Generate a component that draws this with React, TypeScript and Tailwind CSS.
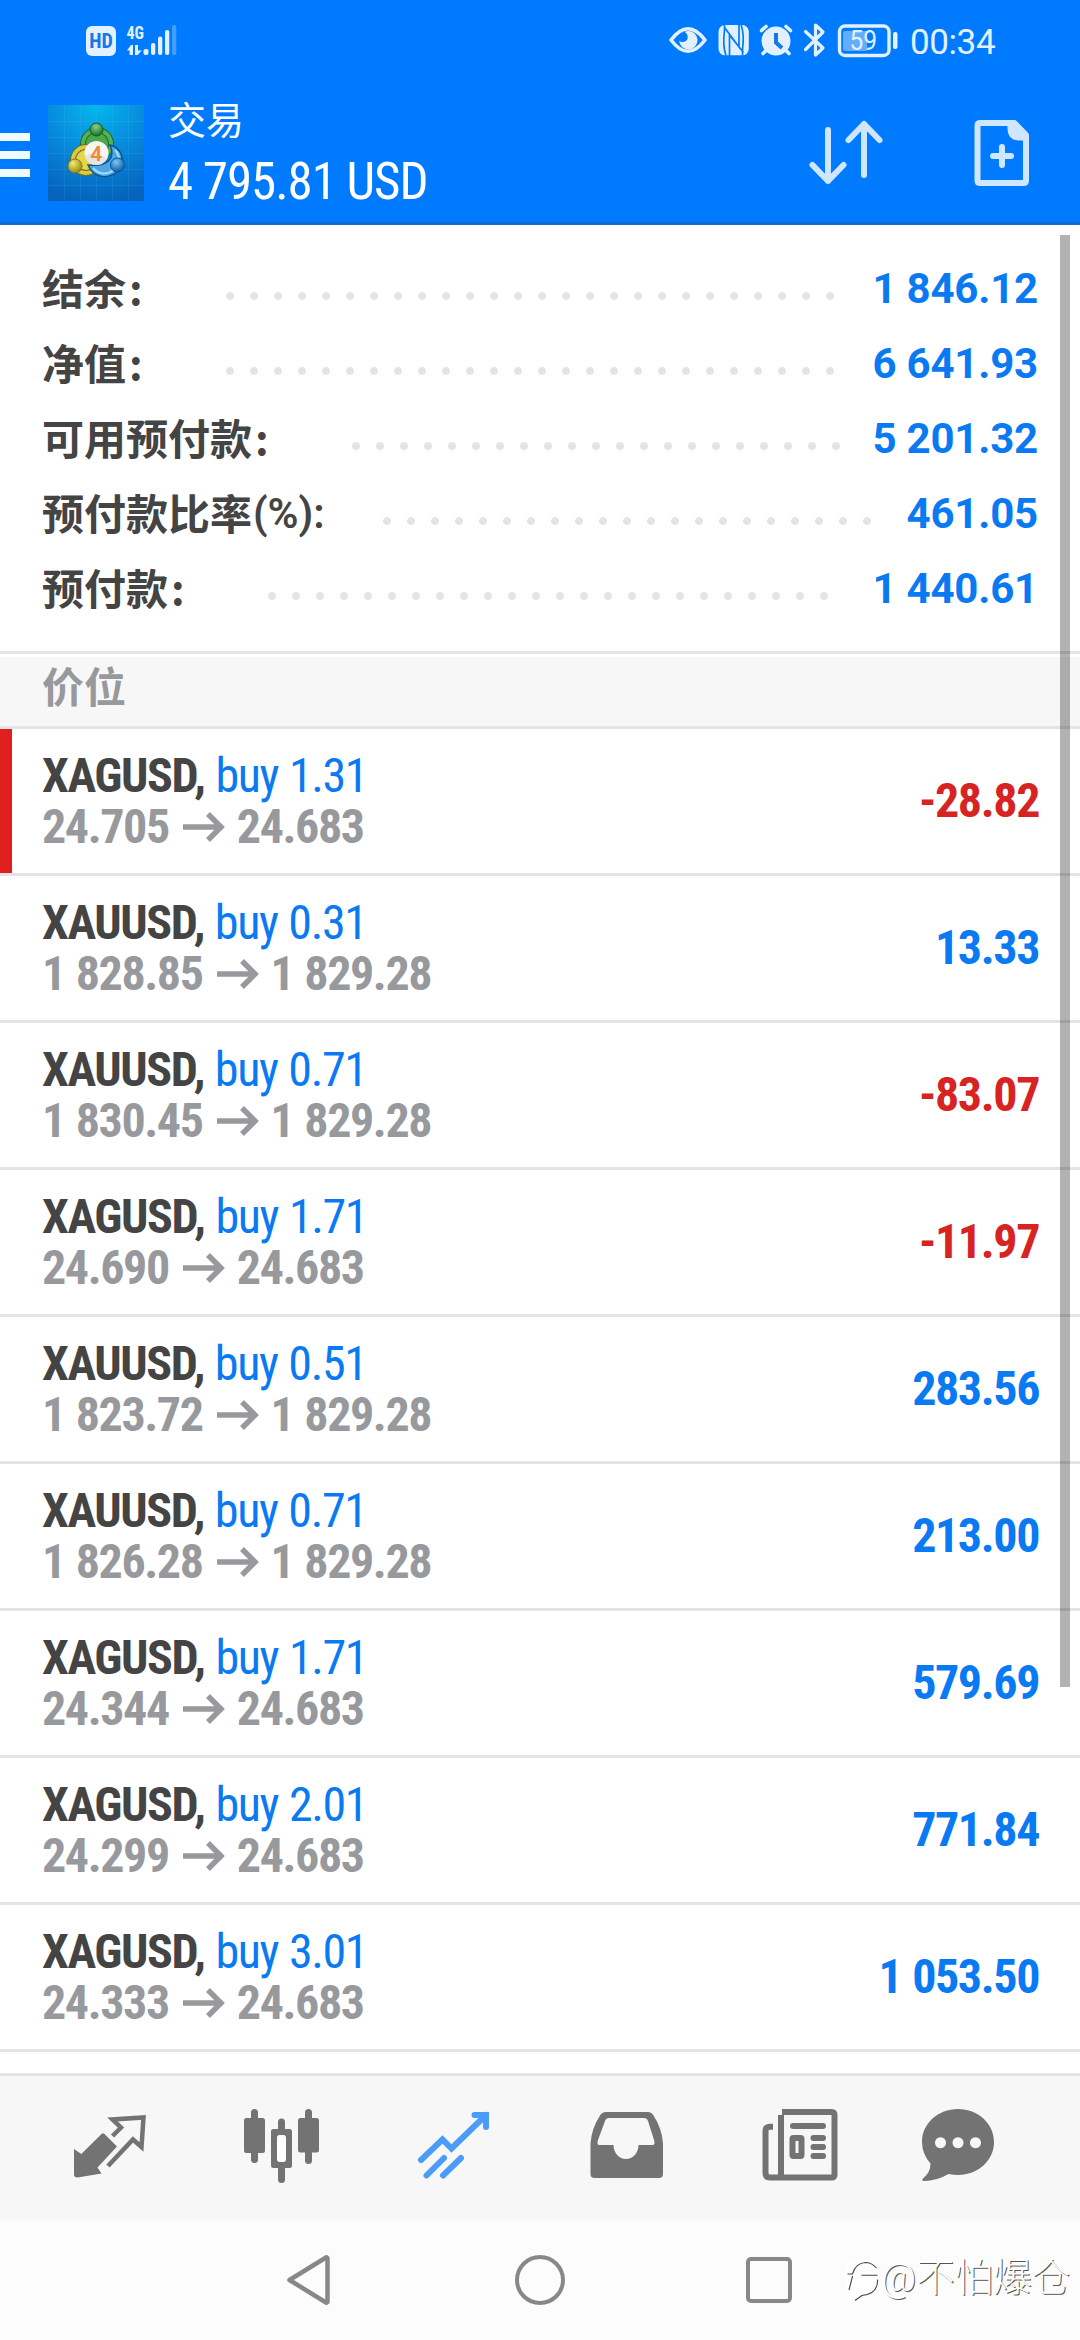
import type { ReactNode } from 'react';

const summary = [
  { label: '结余', value: '1 846.12', dots: 'ml-[218px] w-[624px]' },
  { label: '净值', value: '6 641.93', dots: 'ml-[218px] w-[624px]' },
  { label: '可用预付款', value: '5 201.32', dots: 'ml-[344px] w-[504px]' },
  { label: '预付款比率', suffix: '(%):', value: '461.05', dots: 'ml-[375px] w-[504px]' },
  { label: '预付款', value: '1 440.61', dots: 'ml-[260px] w-[576px]' },
];

const positions = [
  { symbol: 'XAGUSD', volume: '1.31', open: '24.705', now: '24.683', profit: '-28.82', marked: true },
  { symbol: 'XAUUSD', volume: '0.31', open: '1 828.85', now: '1 829.28', profit: '13.33' },
  { symbol: 'XAUUSD', volume: '0.71', open: '1 830.45', now: '1 829.28', profit: '-83.07' },
  { symbol: 'XAGUSD', volume: '1.71', open: '24.690', now: '24.683', profit: '-11.97' },
  { symbol: 'XAUUSD', volume: '0.51', open: '1 823.72', now: '1 829.28', profit: '283.56' },
  { symbol: 'XAUUSD', volume: '0.71', open: '1 826.28', now: '1 829.28', profit: '213.00' },
  { symbol: 'XAGUSD', volume: '1.71', open: '24.344', now: '24.683', profit: '579.69' },
  { symbol: 'XAGUSD', volume: '2.01', open: '24.299', now: '24.683', profit: '771.84' },
  { symbol: 'XAGUSD', volume: '3.01', open: '24.333', now: '24.683', profit: '1 053.50' },
];

function StatusBar() {
  return (
    <div className="flex h-20 items-start pt-[21px] text-[#e2f1ff]">
      <div className="mt-[5px] ml-[86px] flex h-[30px] w-[30px] items-center justify-center rounded-[6px] bg-[#e2f1ff] font-['Roboto_Condensed'] text-[20px] leading-none font-bold text-[#1777e6]">
        HD
      </div>
      <svg className="ml-[10px] h-[38px] w-[52px]" viewBox="126 21 52 38" fill="currentColor">
        <text x="126.5" y="38.5" fontSize="19" fontWeight="700" fontFamily="Roboto Condensed" textLength="17.5" lengthAdjust="spacingAndGlyphs">4G</text>
        <path d="M127 50.5L131 45h2v10h-3.4v-4.500zM135 45h3v5.500h3.800L137.500 55H135z" />
        <rect x="143.500" y="49" width="5" height="6" rx="2" />
        <rect x="151" y="43" width="4.300" height="12" rx="2" />
        <rect x="158" y="36.500" width="4.300" height="18.500" rx="2" />
        <rect x="165" y="30" width="4.300" height="25" rx="2" />
        <rect x="172" y="25" width="4.300" height="30" rx="2" opacity=".3" />
      </svg>
      <svg className="ml-[490px] h-[38px] w-[234px]" viewBox="668 21 234 38" fill="none" stroke="currentColor">
        <path d="M671 40Q688 17.500 705 40Q688 62.500 671 40Z" strokeWidth="3.600" strokeLinejoin="round" />
        <path d="M688 31a9.200 9.200 0 1 1-8.800 9.500c2 2.500 7 2 8.300-1.500.8-3-.5-6-3-7.200z" fill="currentColor" stroke="none" />
        <rect x="718.500" y="25" width="30.300" height="30.300" rx="6.500" fill="currentColor" stroke="none" />
        <path d="M724.500 24.500V30c-1 8-1 19 1.500 25.500M729.500 56V35l14 17.500M724.500 27.500L739 47V24M742.500 55.500V50c1-8 1-19-1.500-25.500" stroke="#007aff" strokeWidth="1.700" />
        <circle cx="776" cy="41" r="14.500" fill="currentColor" stroke="none" />
        <path d="M761.500 30.500l4.500-4M790.500 30.500l-4.500-4M766 50.500l-3 3M786 50.500l3 3" strokeWidth="3.600" strokeLinecap="round" />
        <path d="M776 33v9.500l6 5.500" stroke="#1777e6" strokeWidth="4" />
        <path d="M805.500 31.500L823 48l-7.500 7V25l7.500 7-17.500 17.500" strokeWidth="3.200" strokeLinecap="round" strokeLinejoin="round" />
        <rect x="839.500" y="26" width="49.500" height="29.500" rx="5.500" strokeWidth="3.400" />
        <path d="M843 33q0-2 2-2h22v20h-22q-2 0-2-2z" fill="#62adff" stroke="none" />
        <rect x="893" y="32" width="4.500" height="17" rx="2" fill="currentColor" stroke="none" />
        <text x="849.500" y="50.3" fill="currentColor" stroke="none" fontFamily="Roboto" fontSize="27" textLength="27.500" lengthAdjust="spacingAndGlyphs">59</text>
      </svg>
      <div className="mt-px ml-[8px] font-[Roboto] text-[35px] leading-[41px] tracking-[-0.4px]">00:34</div>
    </div>
  );
}

function Logo() {
  return (
    <svg className="h-24 w-24" viewBox="0 0 96 96">
      <defs>
        <radialGradient id="logoBg" cx=".5" cy="0" r="1">
          <stop offset="0" stopColor="#04b8ec" />
          <stop offset=".5" stopColor="#078bdd" />
          <stop offset="1" stopColor="#0563bd" />
        </radialGradient>
        <radialGradient id="gHead" cx=".45" cy=".3" r=".7">
          <stop offset="0" stopColor="#8fd08b" />
          <stop offset="1" stopColor="#136d25" />
        </radialGradient>
        <radialGradient id="yHead" cx=".35" cy=".3" r=".7">
          <stop offset="0" stopColor="#f2e978" />
          <stop offset="1" stopColor="#9b8d12" />
        </radialGradient>
        <radialGradient id="bHead" cx=".4" cy=".3" r=".7">
          <stop offset="0" stopColor="#7cc7f2" />
          <stop offset="1" stopColor="#0e5ea6" />
        </radialGradient>
      </defs>
      <rect width="96" height="96" fill="url(#logoBg)" />
      <path d="M16.500 0v96M32.500 0v96M48.500 0v96M64.500 0v96M80.500 0v96M0 16.500h96M0 32.500h96M0 48.500h96M0 64.500h96M0 80.500h96" stroke="#59c5f5" strokeOpacity=".15" fill="none" />
      <circle cx="49" cy="39" r="14" fill="#4aa84a" stroke="#1d6a3a" strokeWidth="6" />
      <circle cx="49" cy="39" r="14" fill="none" stroke="#58b052" strokeWidth="4" />
      <circle cx="38" cy="55" r="13" fill="#e4d647" stroke="#726f1e" strokeWidth="6" />
      <circle cx="38" cy="55" r="13" fill="none" stroke="#d5ca49" strokeWidth="4" />
      <path d="M40 60C46 74 60 74 69 67c9-9 6-24-7-27 5 12 0 22-22 20z" fill="#4ca7e4" stroke="#0b5494" strokeWidth="1.500" />
      <path d="M45 63c6 7 15 7 20 2M67 45c3 3 4 7 4 10" stroke="#a9dbf7" strokeWidth="2" fill="none" />
      <circle cx="48.500" cy="24.500" r="6.500" fill="url(#gHead)" stroke="#125f22" />
      <circle cx="27" cy="61" r="7" fill="url(#yHead)" stroke="#7c761b" />
      <circle cx="69.500" cy="60" r="7" fill="url(#bHead)" stroke="#0c5496" />
      <circle cx="48.500" cy="48" r="12" fill="#f5f5f4" />
      <path d="M37 51q10-7 22 3a12 12 0 0 1-22-3z" fill="#d5d5d5" opacity=".5" />
      <text x="48.300" y="55.500" textAnchor="middle" fontFamily="Roboto" fontSize="21" fontWeight="600" fill="#f18a2c">4</text>
    </svg>
  );
}

function Header() {
  return (
    <header className="h-[225px] border-b-3 border-[#0b6dd6] bg-[#007aff]">
      <StatusBar />
      <div className="flex h-[142px] items-start">
        <div className="mt-[53px] flex w-[30px] flex-col gap-[10px]">
          <span className="h-2 bg-[#f0fbff]" />
          <span className="h-2 bg-[#f0fbff]" />
          <span className="h-2 bg-[#f0fbff]" />
        </div>
        <div className="mt-[25px] ml-[18px]">
          <Logo />
        </div>
        <div className="mt-[14px] ml-6 text-white">
          <div className="font-[Roboto,'Noto_Sans_CJK_SC',sans-serif] text-[38px] leading-[54px]">交易</div>
          <div className="font-['Roboto_Condensed',sans-serif] text-[51px] leading-[68px] tracking-[-1.05px]">4 795.81 USD</div>
        </div>
        <svg className="mt-[37px] ml-auto h-[72px] w-[78px]" viewBox="807 117 78 72" fill="none" stroke="#cfe6ff" strokeWidth="6" strokeLinecap="round" strokeLinejoin="round">
          <path d="M828 130v51M812.500 165l15.500 16 15.500-16M864 175v-51M848.500 140l15.500-16 15.500 16" />
        </svg>
        <svg className="mt-[37px] mr-12 ml-[87px] h-[72px] w-[60px]" viewBox="972 117 60 72" fill="none" stroke="#cfe6ff" strokeWidth="6">
          <path d="M980 123h34.500L1026 135v45.500q0 2.500-2.500 2.500H980q-2.500 0-2.500-2.500V125.500q0-2.500 2.500-2.500z" strokeLinejoin="round" />
          <path d="M1007.500 124v4q0 12.500 12 12.500h7v-6l-12-11z" fill="#cfe6ff" stroke="none" />
          <path d="M1002 147v18M993 156h18" strokeLinecap="round" />
        </svg>
      </div>
    </header>
  );
}

function Summary() {
  return (
    <section className="flex h-[426px] flex-col pt-[26px] text-[42px] leading-[75px]">
      {summary.map((row) => (
        <div key={row.label} className="relative flex h-[75px] items-center justify-between pr-[42px] pl-[42px]">
          <div className="flex h-[75px] items-start font-['Noto_Sans_CJK_SC',sans-serif] leading-[71px] font-bold text-[#444]">
            <span>{row.label}</span>
            {row.suffix ? <span className="pl-px font-[Roboto] leading-[75px] font-semibold">{row.suffix}</span> : <span className="pl-[3px]">:</span>}
          </div>
          <div className={`absolute left-0 mt-[15px] h-2 bg-[radial-gradient(circle_at_center,#e4e4e4_3.6px,transparent_4.2px)] bg-[length:24px_8px] ${row.dots}`} />
          <span className="font-[Roboto] font-bold tracking-[-0.2px] text-[#0a7af3]">{row.value}</span>
        </div>
      ))}
    </section>
  );
}

function Arrow() {
  return (
    <svg className="mr-3 ml-[14px] h-[30px] w-[42px]" viewBox="0 0 42 30" fill="none" stroke="currentColor" strokeWidth="5.500">
      <path d="M0 15h38M25 2l13 13L25 28" />
    </svg>
  );
}

function Positions() {
  return (
    <ul className="font-['Roboto_Condensed',sans-serif] text-[48px] tracking-[-1.4px] [word-spacing:1.2px]">
      {positions.map((p, i) => (
        <li key={i} className="flex h-[147px] items-start justify-between border-b-3 border-[#e4e4e4] pr-[41px]">
          <div className={`h-36 pt-[21px] leading-[51px] ${p.marked ? 'border-l-12 border-[#e21f1f] pl-[30px]' : 'pl-[42px]'}`}>
            <div className="text-[#0a7af3]">
              <span className="font-bold text-[#444]">{p.symbol},</span> buy {p.volume}
            </div>
            <div className="flex items-center font-bold text-[#97999d]">
              {p.open}
              <Arrow />
              {p.now}
            </div>
          </div>
          <span className={`leading-[144px] font-bold ${p.profit.startsWith('-') ? 'text-[#d72423]' : 'text-[#0a7af3]'}`}>{p.profit}</span>
        </li>
      ))}
    </ul>
  );
}

function TabIcon({ box, size, children }: { box: string; size: string; children: ReactNode }) {
  return (
    <svg className={size} viewBox={box} fill="currentColor">
      {children}
    </svg>
  );
}

function TabBar() {
  return (
    <nav className="flex h-[147px] items-start border-t-3 border-[#e4e4e4] bg-[#f7f7f7] pt-[27px] text-[#737373]">
      <TabIcon box="70 2103 78 84" size="ml-[70px] h-[84px] w-[78px]">
        <path d="M112.500 2136l8.500-8.500-8.500-8 31-2-2 29.500-8.500-7.500-25 26.500" fill="none" stroke="currentColor" strokeWidth="4.500" />
        <path d="M74 2149l7.300 5L101.500 2134q1.500-1.500 3 0l12.500 12.500-19.500 21 4 6-24 4q-3.500 0-3.500-3z" />
      </TabIcon>
      <TabIcon box="240 2103 84 84" size="ml-[92px] h-[84px] w-[84px]">
        <path d="M254.500 2112.500v47M308.500 2112.500v48M281.500 2122v13M281.500 2165v14.500" stroke="currentColor" strokeWidth="7" strokeLinecap="round" />
        <rect x="244" y="2118" width="21" height="35" rx="2.500" />
        <rect x="298" y="2118" width="21" height="34.500" rx="2.500" />
        <rect x="274" y="2132" width="15" height="33" fill="#fff" />
        <path fillRule="evenodd" d="M273.500 2129h16q2.500 0 2.500 2.500v34q0 2.500-2.500 2.500h-16q-2.500 0-2.500-2.500v-34q0-2.500 2.500-2.500zM279.500 2135q-2.500 0-2.500 3v21q0 3 2.500 3h4q2.500 0 2.500-3v-21q0-3-2.500-3z" />
      </TabIcon>
      <TabIcon box="414 2103 80 84" size="ml-[90px] h-[84px] w-[80px] text-[#4a9cf8]">
        <path d="M421 2160l21.500-20.500 9 9L486 2115M474.500 2115H486v12M426.500 2175.500l17.500-17.500M443 2175.500l18-17.500" fill="none" stroke="currentColor" strokeWidth="6" strokeLinecap="round" />
      </TabIcon>
      <TabIcon box="586 2103 80 84" size="ml-[92px] h-[84px] w-[80px]">
        <path fillRule="evenodd" d="M606 2112h42q3.500 0 5.500 3.500 8.500 13 9.500 28V2174q0 4-4 4h-64.500q-4 0-4-4v-30.500q1-15 9.500-28 2-3.500 6-3.500zM609 2118q-3 0-4 3l-7 19q-1.500 5 1.500 5H613.500a12.500 14 0 0 0 25 0h14q3 0 1.500-5l-6-19q-1-3-4-3z" />
      </TabIcon>
      <TabIcon box="760 2103 80 84" size="ml-[94px] h-[84px] w-[80px]">
        <path d="M782 2112h49.500q3 0 3 3v59.500q0 3-3 3H770q-4.500 0-4.500-4.500V2131q0-4 4-4.300h3.500M781 2178v-63" fill="none" stroke="currentColor" strokeWidth="6" />
        <path d="M793 2126h30M813.500 2138h9.500M813.500 2147h9.500M813.500 2156h9.500" stroke="currentColor" strokeWidth="6" strokeLinecap="round" />
        <rect x="792.500" y="2138" width="9" height="18" rx="1" fill="none" stroke="currentColor" strokeWidth="6" />
      </TabIcon>
      <TabIcon box="918 2103 80 84" size="ml-[78px] h-[84px] w-[80px]">
        <path fillRule="evenodd" d="M958 2109c20 0 36 14.500 36 33s-16 33-36 33q-4.500 0-9.500-1-12 7-24.500 7-3-.5-1-2.500 7.500-6 7.500-15Q922 2154 922 2142c0-18.500 16-33 36-33zM940.500 2137.200a5.500 5.500 0 1 0 .01 0zM958 2137.200a5.500 5.500 0 1 0 .01 0zM975.500 2137.200a5.500 5.500 0 1 0 .01 0z" />
      </TabIcon>
    </nav>
  );
}

function SystemNav() {
  return (
    <div className="flex h-[120px] items-center bg-[#fcfcfc] text-[#888]">
      <svg className="ml-[284px] h-[56px] w-[50px]" viewBox="284 2252 50 56" fill="none" stroke="currentColor" strokeWidth="4.500" strokeLinejoin="round">
        <path d="M289.500 2280L326 2257.500q1.500-.5 1.500 1v43q0 1.500-1.500 1z" />
      </svg>
      <div className="ml-[181px] h-[50px] w-[50px] rounded-full border-[4.500px] border-[#888]" />
      <div className="ml-[181px] h-[46px] w-[46px] rounded-[5px] border-[4.500px] border-[#888]" />
      <div className="mb-1 ml-[51px] flex items-center font-[Roboto,'Noto_Sans_CJK_SC',sans-serif] text-[38.5px] leading-none font-light whitespace-nowrap text-white [text-shadow:1px_1px_0_#555]">
        <svg className="h-[48px] w-[38px]" viewBox="0 0 38 48" fill="none">
          <path d="M1 17Q4 5 20 6q16 0 16 16 0 17-17 20l-8 6-7-12z" fill="#fff" />
          <path d="M4.500 20h5q3-11 13-11.500 6 0 11 5.500M18.500 21.300h16M9.600 22L6 36M34.600 25.500Q35 40 19 41.500q-3 2-7 5" stroke="#444" strokeWidth="1.100" />
        </svg>
        @不怕爆仓
      </div>
    </div>
  );
}

export default function App() {
  return (
    <div className="relative flex h-[2340px] w-[1080px] flex-col overflow-hidden bg-white">
      <Header />
      <main className="h-[1848px] overflow-hidden">
        <Summary />
        <div className="h-[78px] border-y-3 border-[#e4e4e4] bg-white pt-[3px]">
          <div className="h-[69px] bg-[#f7f7f7] pl-[42px] font-[Roboto,'Noto_Sans_CJK_SC',sans-serif] text-[42px] leading-[63px] font-bold text-[#97999d]">价位</div>
        </div>
        <Positions />
      </main>
      <TabBar />
      <SystemNav />
      <div className="absolute top-[235px] right-[10px] h-[1452px] w-[10px] bg-black/30" />
    </div>
  );
}
